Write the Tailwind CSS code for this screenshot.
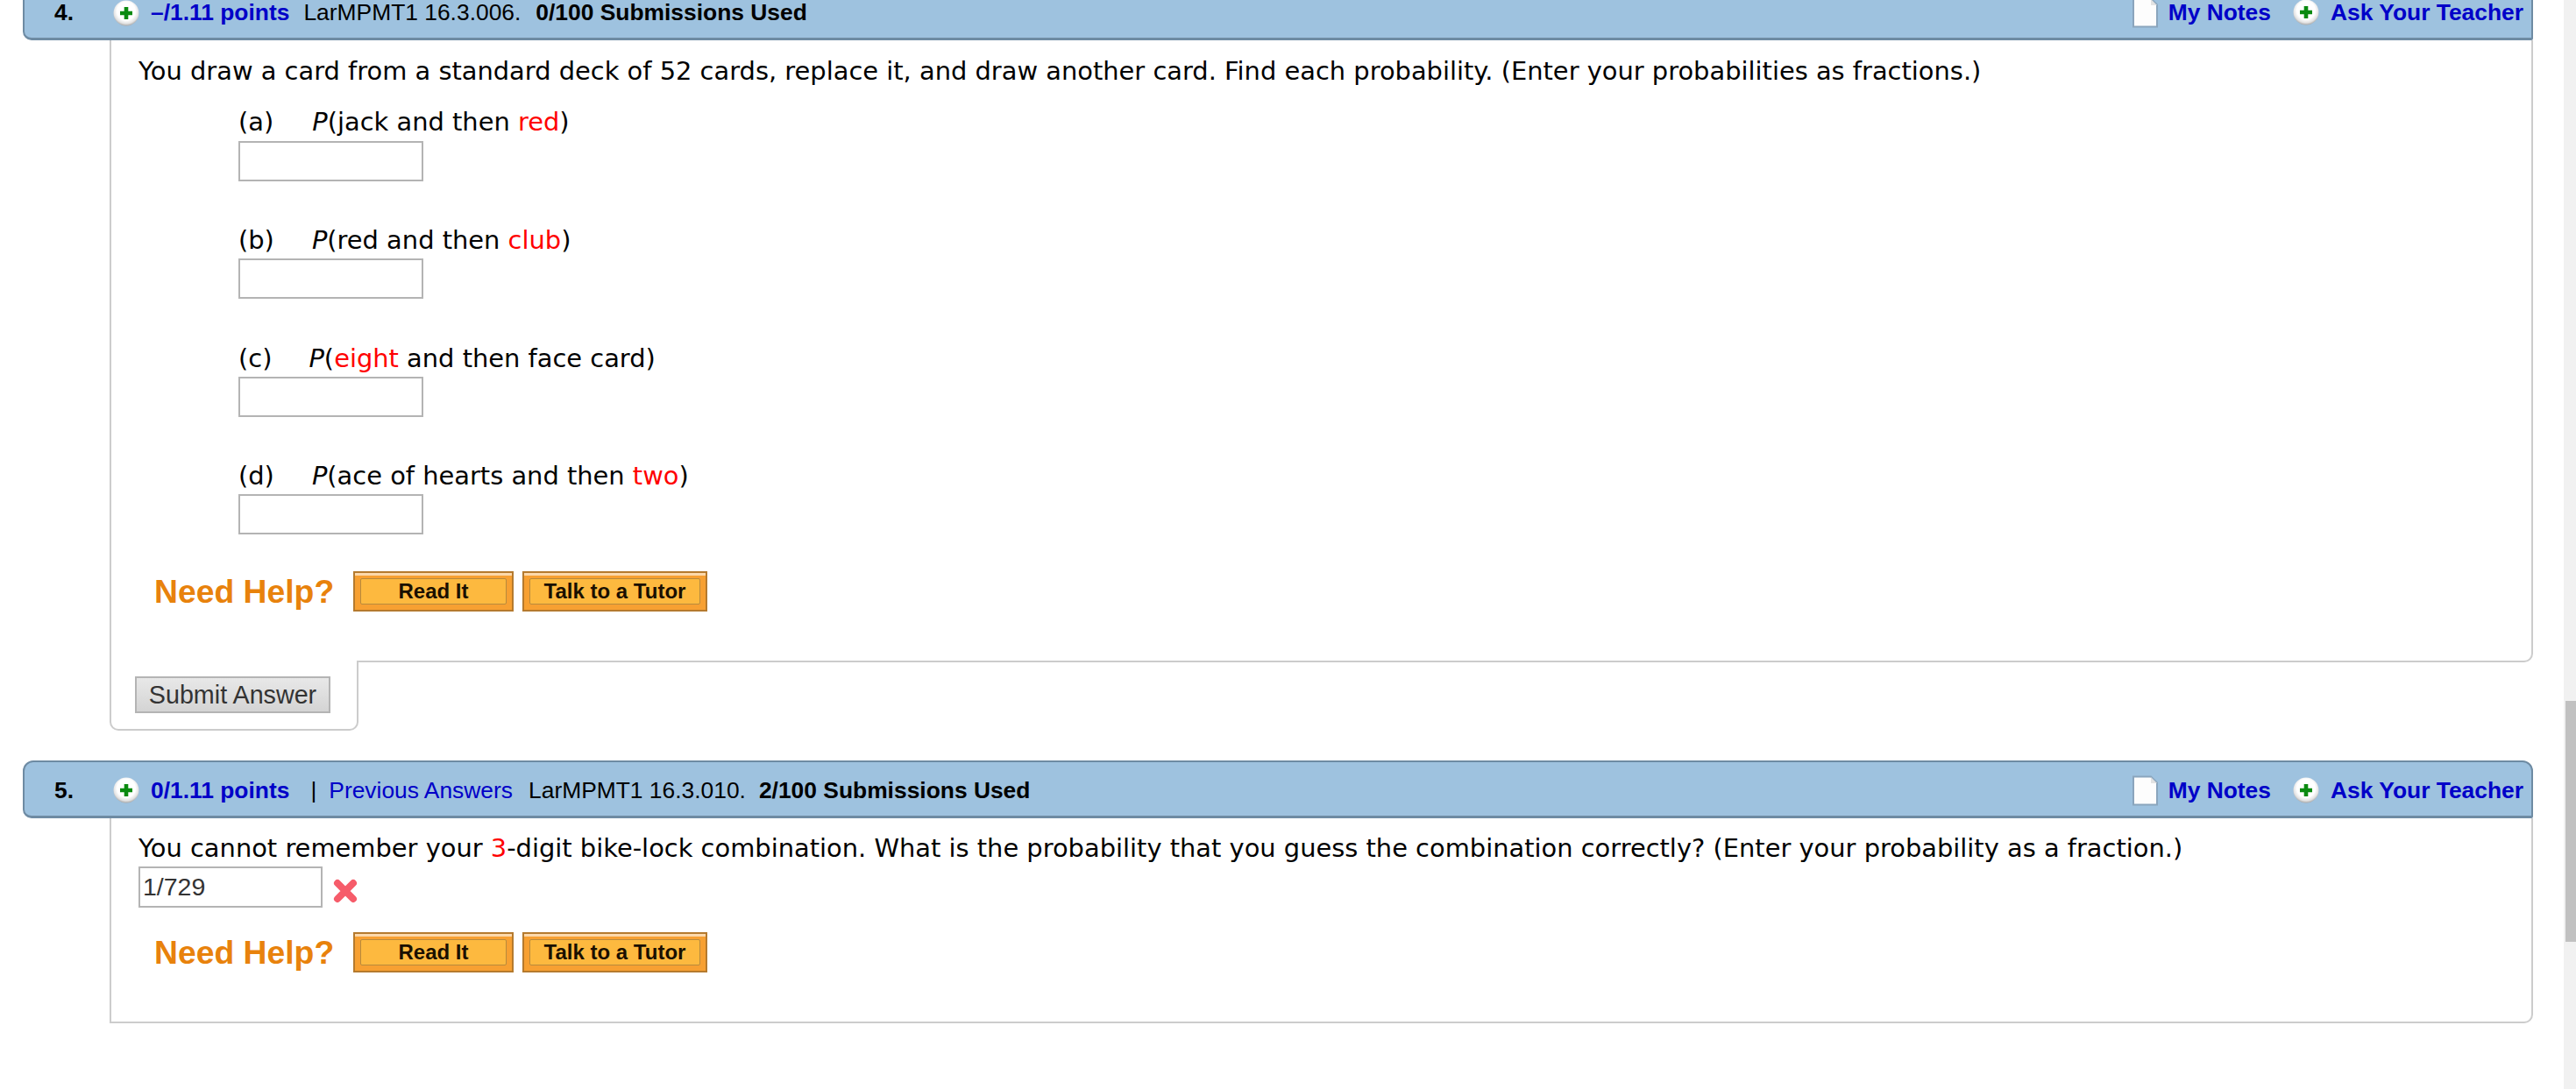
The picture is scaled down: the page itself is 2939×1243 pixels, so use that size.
<!DOCTYPE html>
<html lang="en">
<head>
    <meta charset="UTF-8">
    <title>Assignment</title>
    <script src="https://cdn.jsdelivr.net/npm/@tailwindcss/browser@4"></script>
</head>
<body class="bg-white h-screen overflow-hidden flex font-['DejaVu_Sans',sans-serif] text-black">
    <main class="flex-1 min-w-0 pl-[26px] pr-[35px] -mt-[20px]">
        <!-- question 4 -->
        <section>
            <div class="h-[66px] flex items-center pl-[34px] pr-[9px] pt-[4px] bg-[#9ec2df] border-2 border-b-[3px] border-[#6e8ba3] rounded-t-[12px] rounded-bl-[10px] rounded-br-[2px] font-['Liberation_Sans',sans-serif] text-[26.4px]">
                <b class="w-[67px]">4.</b>
                <svg class="w-[30px] h-[30px] mr-[13px]" viewBox="0 0 30 30"><defs><radialGradient id="g1" cx="50%" cy="42%" r="58%"><stop offset="62%" stop-color="#fff"/><stop offset="85%" stop-color="#e2e2e2"/><stop offset="100%" stop-color="#a8a8a8"/></radialGradient></defs><circle cx="15" cy="15" r="14.5" fill="url(#g1)"/><path d="M12.7 8h4.6v4.7H22v4.6h-4.7V22h-4.6v-4.7H8v-4.6h4.7z" fill="#0a8a10"/></svg>
                <b class="text-[#0000c8]">–/1.11 points</b>
                <span class="ml-[16px]">LarMPMT1 16.3.006.</span>
                <b class="ml-[17px]">0/100 Submissions Used</b>
                <div class="ml-auto flex items-center">
                    <svg class="w-[31px] h-[35px] mr-[11px]" viewBox="0 0 31 35"><path d="M2 1.5h20l7 7V33.5H2z" fill="#fdfdfd" stroke="#8aa5bd" stroke-width="2"/><path d="M22 2v7h7z" fill="#e2e2e2"/></svg>
                    <b class="text-[#0000c8]">My Notes</b>
                    <svg class="w-[30px] h-[30px] ml-[25px] mr-[13px]" viewBox="0 0 30 30"><defs><radialGradient id="g2" cx="50%" cy="42%" r="58%"><stop offset="62%" stop-color="#fff"/><stop offset="85%" stop-color="#e2e2e2"/><stop offset="100%" stop-color="#a8a8a8"/></radialGradient></defs><circle cx="15" cy="15" r="14.5" fill="url(#g2)"/><path d="M12.7 8h4.6v4.7H22v4.6h-4.7V22h-4.6v-4.7H8v-4.6h4.7z" fill="#0a8a10"/></svg>
                    <b class="text-[#0000c8]">Ask Your Teacher</b>
                </div>
            </div>
            <div class="ml-[99px] pl-[31px] pt-[17px] pb-[56px] border-x-2 border-b-2 border-[#cccccc] rounded-br-[10px] text-[28.9px] leading-[36px]">
                <p>You draw a card from a standard deck of 52 cards, replace it, and draw another card. Find each probability. (Enter your probabilities as fractions.)</p>
                <div class="mt-[22px] ml-[114px] flex flex-col gap-[49.33px]">
                    <div>
                        <div class="flex gap-[44px]"><span>(a)</span><span><i>P</i>(jack and then <span class="text-[#ff0000]">red</span>)</span></div>
                        <input type="text" class="block mt-[4px] w-[211px] h-[46px] border-2 border-[#b4b4b4] bg-white">
                    </div>
                    <div>
                        <div class="flex gap-[43px]"><span>(b)</span><span><i>P</i>(red and then <span class="text-[#ff0000]">club</span>)</span></div>
                        <input type="text" class="block mt-[3px] w-[211px] h-[46px] border-2 border-[#b4b4b4] bg-white">
                    </div>
                    <div>
                        <div class="flex gap-[42px]"><span>(c)</span><span><i>P</i>(<span class="text-[#ff0000]">eight</span> and then face card)</span></div>
                        <input type="text" class="block mt-[3px] w-[211px] h-[46px] border-2 border-[#b4b4b4] bg-white">
                    </div>
                    <div>
                        <div class="flex gap-[43px]"><span>(d)</span><span><i>P</i>(ace of hearts and then <span class="text-[#ff0000]">two</span>)</span></div>
                        <input type="text" class="block mt-[3px] w-[211px] h-[46px] border-2 border-[#b4b4b4] bg-white">
                    </div>
                </div>
                <div class="mt-[42px] ml-[18px] flex items-center font-['Liberation_Sans',sans-serif]">
                    <span class="w-[227px] text-[37.3px] font-bold text-[#e8820c]">Need Help?</span>
                    <div class="w-[183px] h-[46px] mr-[10px] p-[6px] border-2 border-[#b57a2e] bg-[#f7a032] shadow-[inset_0_3px_0_#fcd9ac]"><div class="h-full flex items-center justify-center border border-[#b88a3c] bg-[#fdb93f] rounded-[2px] text-[24px] font-bold text-[#1a1000]">Read It</div></div>
                    <div class="w-[211px] h-[46px] p-[6px] border-2 border-[#b57a2e] bg-[#f7a032] shadow-[inset_0_3px_0_#fcd9ac]"><div class="h-full flex items-center justify-center border border-[#b88a3c] bg-[#fdb93f] rounded-[2px] text-[24px] font-bold text-[#1a1000]">Talk to a Tutor</div></div>
                </div>
            </div>
            <div class="ml-[99px] -mt-[2px] w-[284px] h-[80px] pl-[27px] pt-[18px] bg-white border-x-2 border-b-2 border-[#cccccc] rounded-b-[10px]">
                <button class="block w-[223px] h-[42px] bg-gradient-to-b from-[#e8e8e8] to-[#d4d4d4] border-2 border-[#b4b4b4] font-['Liberation_Sans',sans-serif] text-[28.7px] leading-none text-[#333333]">Submit Answer</button>
            </div>
        </section>
        <!-- question 5 -->
        <section class="mt-[34px]">
            <div class="h-[66px] flex items-center pl-[34px] pr-[9px] pt-[4px] bg-[#9ec2df] border-2 border-b-[3px] border-[#6e8ba3] rounded-t-[12px] rounded-bl-[10px] rounded-br-[2px] font-['Liberation_Sans',sans-serif] text-[26.4px]">
                <b class="w-[67px]">5.</b>
                <svg class="w-[30px] h-[30px] mr-[13px]" viewBox="0 0 30 30"><defs><radialGradient id="g3" cx="50%" cy="42%" r="58%"><stop offset="62%" stop-color="#fff"/><stop offset="85%" stop-color="#e2e2e2"/><stop offset="100%" stop-color="#a8a8a8"/></radialGradient></defs><circle cx="15" cy="15" r="14.5" fill="url(#g3)"/><path d="M12.7 8h4.6v4.7H22v4.6h-4.7V22h-4.6v-4.7H8v-4.6h4.7z" fill="#0a8a10"/></svg>
                <b class="text-[#0000c8]">0/1.11 points</b>
                <span class="ml-[24px]">|</span>
                <span class="ml-[14px] text-[#0000c8]">Previous Answers</span>
                <span class="ml-[18px]">LarMPMT1 16.3.010.</span>
                <b class="ml-[15px]">2/100 Submissions Used</b>
                <div class="ml-auto flex items-center">
                    <svg class="w-[31px] h-[35px] mr-[11px]" viewBox="0 0 31 35"><path d="M2 1.5h20l7 7V33.5H2z" fill="#fdfdfd" stroke="#8aa5bd" stroke-width="2"/><path d="M22 2v7h7z" fill="#e2e2e2"/></svg>
                    <b class="text-[#0000c8]">My Notes</b>
                    <svg class="w-[30px] h-[30px] ml-[25px] mr-[13px]" viewBox="0 0 30 30"><defs><radialGradient id="g4" cx="50%" cy="42%" r="58%"><stop offset="62%" stop-color="#fff"/><stop offset="85%" stop-color="#e2e2e2"/><stop offset="100%" stop-color="#a8a8a8"/></radialGradient></defs><circle cx="15" cy="15" r="14.5" fill="url(#g4)"/><path d="M12.7 8h4.6v4.7H22v4.6h-4.7V22h-4.6v-4.7H8v-4.6h4.7z" fill="#0a8a10"/></svg>
                    <b class="text-[#0000c8]">Ask Your Teacher</b>
                </div>
            </div>
            <div class="ml-[99px] pl-[31px] pt-[16px] pb-[56px] border-x-2 border-b-2 border-[#cccccc] rounded-br-[10px] text-[28.9px] leading-[36px]">
                <p>You cannot remember your <span class="text-[#ff0000]">3</span>-digit bike-lock combination. What is the probability that you guess the combination correctly? (Enter your probability as a fraction.)</p>
                <div class="mt-[3px] flex items-start">
                    <input type="text" value="1/729" class="block w-[210px] h-[47px] px-[3px] border-2 border-[#b4b4b4] bg-white font-['Liberation_Sans',sans-serif] text-[28.5px] text-[#333333]">
                    <svg class="w-[30px] h-[30px] mt-[13px] ml-[11px]" viewBox="0 0 30 30"><path d="M6 6L24 24M24 6L6 24" fill="none" stroke="#f65c6a" stroke-width="8" stroke-linecap="round"/></svg>
                </div>
                <div class="mt-[28px] ml-[18px] flex items-center font-['Liberation_Sans',sans-serif]">
                    <span class="w-[227px] text-[37.3px] font-bold text-[#e8820c]">Need Help?</span>
                    <div class="w-[183px] h-[46px] mr-[10px] p-[6px] border-2 border-[#b57a2e] bg-[#f7a032] shadow-[inset_0_3px_0_#fcd9ac]"><div class="h-full flex items-center justify-center border border-[#b88a3c] bg-[#fdb93f] rounded-[2px] text-[24px] font-bold text-[#1a1000]">Read It</div></div>
                    <div class="w-[211px] h-[46px] p-[6px] border-2 border-[#b57a2e] bg-[#f7a032] shadow-[inset_0_3px_0_#fcd9ac]"><div class="h-full flex items-center justify-center border border-[#b88a3c] bg-[#fdb93f] rounded-[2px] text-[24px] font-bold text-[#1a1000]">Talk to a Tutor</div></div>
                </div>
            </div>
        </section>
    </main>
    <!-- page scrollbar -->
    <aside class="w-[14px] shrink-0 bg-[#f1f1f1] pl-[2px] pt-[800px]">
        <div class="h-[275px] bg-[#c1c1c1]"></div>
    </aside>
</body>
</html>
